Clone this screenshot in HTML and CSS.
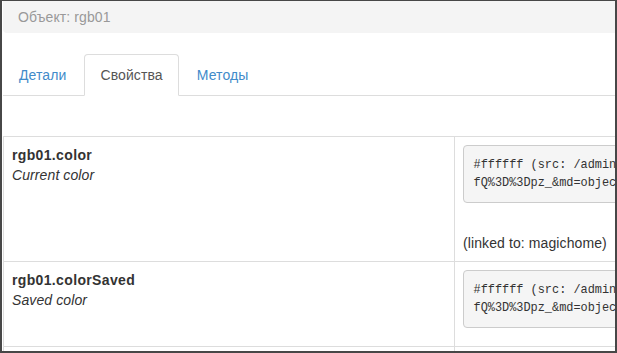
FILE: index.html
```html
<!DOCTYPE html>
<html lang="ru">
<head>
    <meta charset="UTF-8">
    <meta name="viewport" content="width=device-width, initial-scale=1.0">
    <title>Объект: rgb01</title>
    <link rel="stylesheet" href="styles.css">
</head>
<body>

    <div class="window">
        <div class="page">

            <div class="panel-heading">Объект: rgb01</div>

            <ul class="nav-tabs">
                <li><a href="#">Детали</a></li>
                <li class="active"><a href="#">Свойства</a></li>
                <li><a href="#">Методы</a></li>
            </ul>

            <table class="props">
                <tbody>
                    <tr>
                        <td class="prop-name">
                            <b>rgb01.color</b><br>
                            <i>Current color</i>
                        </td>
                        <td class="prop-value">
                            <pre>#ffffff (src: /admin.php?pd=pz_&amp;md=objects&amp;inst=adm&amp;
fQ%3D%3Dpz_&amp;md=objects&amp;view_mode=edit_objects</pre>
                            <br>(linked to: magichome)
                        </td>
                    </tr>
                    <tr>
                        <td class="prop-name">
                            <b>rgb01.colorSaved</b><br>
                            <i>Saved color</i>
                        </td>
                        <td class="prop-value">
                            <pre>#ffffff (src: /admin.php?pd=pz_&amp;md=objects&amp;inst=adm&amp;
fQ%3D%3Dpz_&amp;md=objects&amp;view_mode=edit_objects</pre>
                        </td>
                    </tr>
                    <tr>
                        <td class="prop-name">&nbsp;</td>
                        <td class="prop-value">&nbsp;</td>
                    </tr>
                </tbody>
            </table>

        </div>
    </div>

</body>
</html>
```

FILE: styles.css
```css
html, body {
    margin: 0;
    padding: 0;
}
body {
    font-family: "Liberation Sans", Arial, sans-serif;
    font-size: 14px;
    line-height: 20px;
    letter-spacing: 0.1px;
    color: #333;
    background-color: #fff;
}
.window {
    box-sizing: border-box;
    width: 617px;
    height: 353px;
    overflow: hidden;
    border-style: solid;
    border-color: #474747;
    border-width: 1px 2px 2px 2px;
}
.page {
    padding-left: 1px;
    width: 1000px;
}
.panel-heading {
    background-color: #f4f4f4;
    color: #999;
    padding: 6px 15px;
    border-radius: 0 0 0 4px;
}
/* tabs */
.nav-tabs {
    list-style: none;
    margin: 21px 0 0 0;
    padding: 0;
    display: flex;
    border-bottom: 1px solid #ddd;
}
.nav-tabs li {
    margin-right: 2px;
    margin-bottom: -1px;
}
.nav-tabs a {
    display: block;
    padding: 10px 15px;
    border: 1px solid transparent;
    border-radius: 4px 4px 0 0;
    color: #428bca;
    text-decoration: none;
}
.nav-tabs .active a {
    color: #555;
    background-color: #fff;
    border-color: #ddd #ddd transparent #ddd;
}
/* properties table */
.props {
    margin-top: 40px;
    border-collapse: collapse;
    border: 1px solid #ddd;
    width: 900px;
}
.props td {
    border: 1px solid #ddd;
    padding: 8px;
    vertical-align: top;
}
.props b {
    letter-spacing: 0.35px;
}
.prop-name {
    width: 434px;
}
.props pre {
    margin: 0 0 10px 0;
    padding: 9.5px;
    font-family: "Liberation Mono", "Courier New", monospace;
    font-size: 11.9px;
    line-height: 18.5px;
    letter-spacing: 0;
    color: #333;
    background-color: #f5f5f5;
    border: 1px solid #ccc;
    border-radius: 4px;
    white-space: pre;
}
```
